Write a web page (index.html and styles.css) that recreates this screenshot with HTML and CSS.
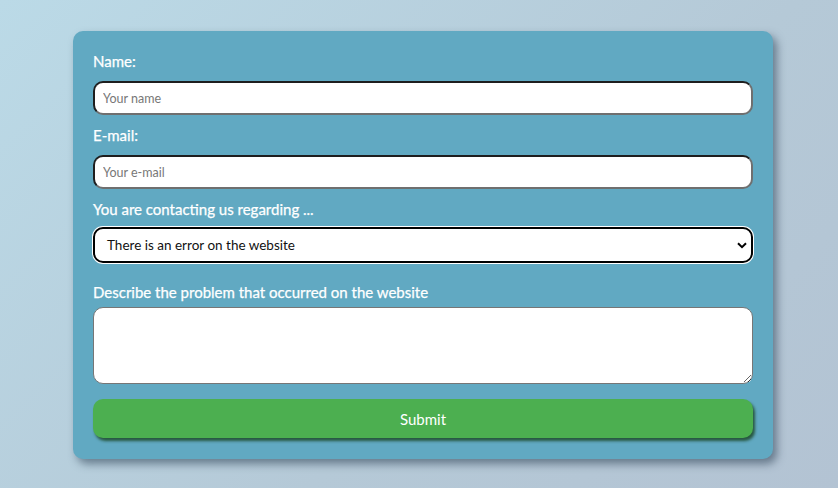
FILE: index.html
```html
<!DOCTYPE html>
<html>
<head>
<meta charset="utf-8">
<link rel="stylesheet" href="styles.css">
</head>
<body>
<form class="card">
  <label class="lbl lbl-first">Name:</label>
  <input class="field" type="text" placeholder="Your name">
  <label class="lbl">E-mail:</label>
  <input class="field" type="text" placeholder="Your e-mail">
  <label class="lbl">You are contacting us regarding ...</label>
  <div class="select">
    <span>There is an error on the website</span>
    <svg class="chev" width="10" height="7" viewBox="0 0 10 7"><path d="M1 1.2 L5 5.2 L9 1.2" fill="none" stroke="#000" stroke-width="2"/></svg>
  </div>
  <label class="lbl lbl-desc">Describe the problem that occurred on the website</label>
  <textarea class="area"></textarea>
  <button class="submit" type="button">Submit</button>
</form>
</body>
</html>
```
FILE: styles.css
```css
html, body { margin: 0; height: 100%; }
body {
  background: linear-gradient(135deg, #bbdae7 0%, #b5c9d7 60%, #b3c3d3 100%);
  padding: 31px 0 0 73px;
  box-sizing: border-box;
  font-family: "Lato", "Open Sans", sans-serif;
}
.card {
  width: 700px;
  height: 428px;
  box-sizing: border-box;
  background: #61a9c2;
  border-radius: 10px;
  box-shadow: 4px 5px 8px rgba(40, 60, 80, 0.55);
  padding: 20px 20px 0 20px;
  display: flex;
  flex-direction: column;
}
.lbl {
  color: #fff;
  font-size: 15px;
  line-height: 20px;
  height: 20px;
  margin: 10px 0 10px 0;
  display: block;
  -webkit-text-stroke: 0.25px #fff;
}
.lbl-first { margin-top: 0; }
.lbl-desc { margin-top: 19px; margin-bottom: 5px; }
.field {
  height: 34px;
  box-sizing: border-box;
  border: 2px solid;
  border-color: #1e1e1e #6f6f6f #6f6f6f #1e1e1e;
  border-radius: 10px;
  background: #fff;
  padding: 0 8px;
  font-family: "Lato", sans-serif;
  font-size: 12.5px;
  outline: none;
}
.field::placeholder { color: #777; }
.select {
  height: 36px;
  box-sizing: border-box;
  border: 2px solid #000;
  border-radius: 10px;
  background: #fff;
  box-shadow: 0 0 0 1px #fff;
  display: flex;
  align-items: center;
  justify-content: space-between;
  padding: 0 4px 0 12px;
  font-size: 13.5px;
  color: #111;
  margin-top: -2px;
}
.area {
  height: 77px;
  box-sizing: border-box;
  border: 1px solid #767676;
  border-radius: 10px;
  background: #fff;
  resize: vertical;
  outline: none;
}
.submit {
  margin-top: 15px;
  height: 39px;
  border: none;
  border-radius: 10px;
  background: #4caf50;
  color: #fff;
  font-family: "Lato", sans-serif;
  font-size: 15px;
  box-shadow: 2px 3px 3px rgba(20, 60, 20, 0.75);
}
```
